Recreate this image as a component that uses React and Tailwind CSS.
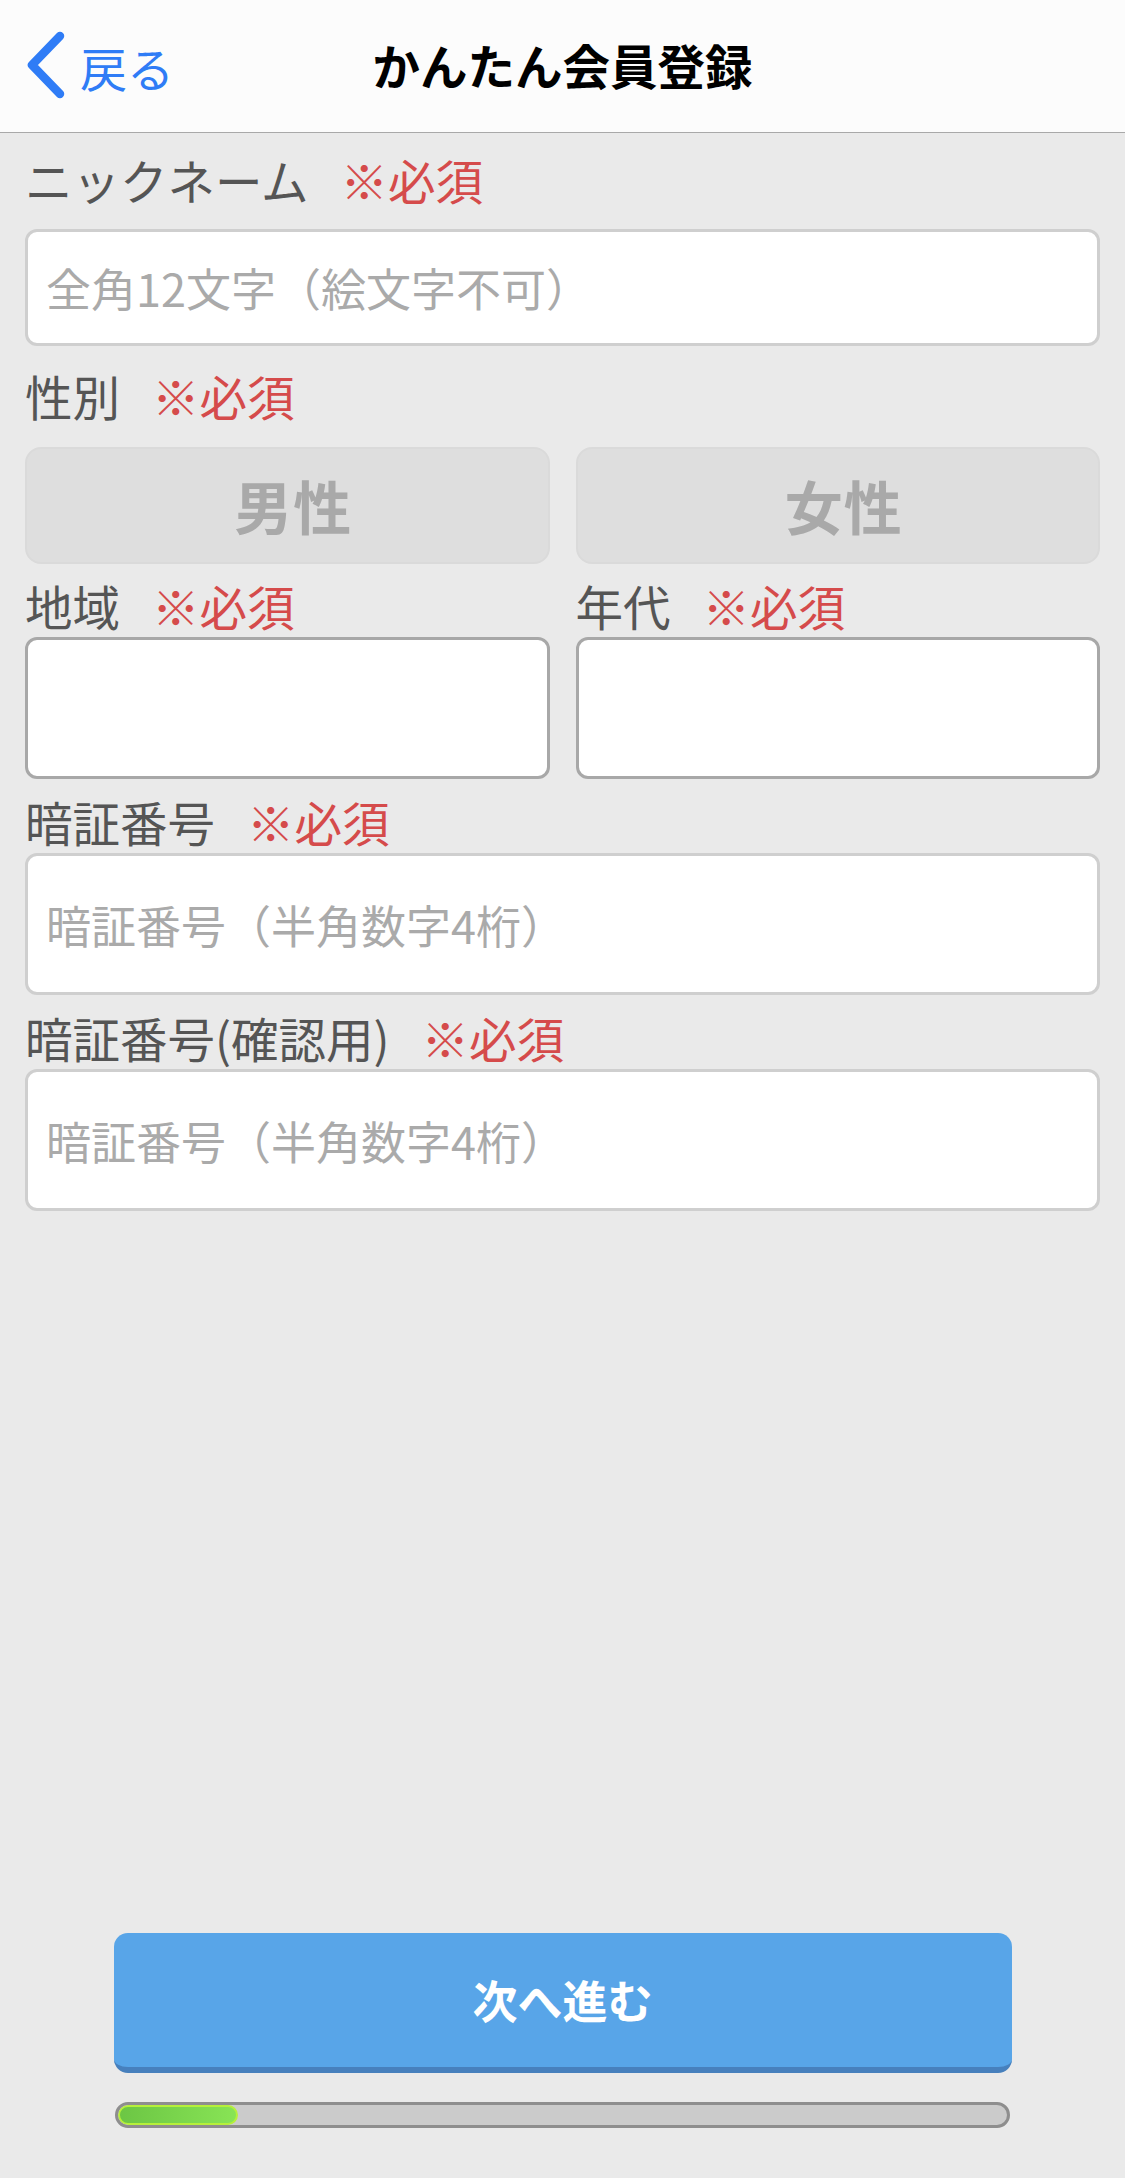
import React from "react";

const font = { fontFamily: '"Noto Sans CJK JP", "Noto Sans", sans-serif' };

function Label({ text, className = "" }) {
  return (
    <div className={`flex items-center text-[47.5px] leading-[56px] text-[#555555] ${className}`}>
      <span>{text}</span>
      <span className="ml-[32px] text-[#d54b4b]">※必須</span>
    </div>
  );
}

function TextBox({ placeholder, className = "" }) {
  return (
    <input
      type="text"
      placeholder={placeholder}
      className={`block w-full bg-white border-[3px] border-[#cfcfcf] rounded-[12px] pl-[18px] text-[45px] text-[#555] placeholder:text-[#aaaaaa] outline-none ${className}`}
    />
  );
}

export default function App() {
  return (
    <div style={font} className="w-[1125px] h-[2178px] bg-[#eaeaea] flex flex-col overflow-hidden">
      {/* header */}
      <header className="h-[133px] shrink-0 bg-[#fcfcfc] border-b-[1.5px] border-[#a9a9a9] grid grid-cols-[1fr_auto_1fr] items-center">
        <div className="flex items-center pl-[26px]">
          <svg width="40" height="70" viewBox="0 0 40 70" className="block">
            <polyline
              points="34,5 6,34 34,63"
              fill="none"
              stroke="#2f7cf6"
              strokeWidth="8.5"
              strokeLinecap="round"
              strokeLinejoin="round"
            />
          </svg>
          <span className="ml-[14px] text-[47px] leading-none text-[#2f7cf6]">戻る</span>
        </div>
        <h1 className="text-[47.5px] font-bold text-black leading-none mt-[-3px]">かんたん会員登録</h1>
        <div />
      </header>

      {/* form */}
      <main className="px-[25px] flex flex-col">
        <Label text="ニックネーム" className="mt-[19px]" />
        <TextBox placeholder="全角12文字（絵文字不可）" className="mt-[21px] h-[117px]" />

        <Label text="性別" className="mt-[22px]" />
        <div className="mt-[23px] grid grid-cols-2 gap-[26px]">
          <button className="h-[117px] rounded-[16px] bg-[#dedede] border-2 border-[#dadada] pl-[12px] text-[58px] font-bold text-[#a9a9a9] tracking-[1px]">
            男性
          </button>
          <button className="h-[117px] rounded-[16px] bg-[#dedede] border-2 border-[#dadada] pl-[12px] text-[58px] font-bold text-[#a9a9a9] tracking-[1px]">
            女性
          </button>
        </div>

        <div className="mt-[14px] grid grid-cols-2 gap-[26px]">
          <div className="flex flex-col">
            <Label text="地域" />
            <div className="mt-[3px] h-[142px] bg-white border-[3px] border-[#a8a8a8] rounded-[12px]" />
          </div>
          <div className="flex flex-col">
            <Label text="年代" />
            <div className="mt-[3px] h-[142px] bg-white border-[3px] border-[#a8a8a8] rounded-[12px]" />
          </div>
        </div>

        <Label text="暗証番号" className="mt-[15px]" />
        <TextBox placeholder="暗証番号（半角数字4桁）" className="mt-[3px] h-[142px]" />

        <Label text="暗証番号(確認用)" className="mt-[15px]" />
        <TextBox placeholder="暗証番号（半角数字4桁）" className="mt-[3px] h-[142px]" />
      </main>

      {/* footer */}
      <footer className="mt-auto pb-[50px] flex flex-col items-center">
        <button className="w-[898px] h-[140px] rounded-[14px] bg-[#58a5e8] border-b-[6px] border-[#4780bd] text-white text-[45px] font-bold flex items-center justify-center">
          次へ進む
        </button>
        <div className="mt-[29px] w-[895px] h-[26px] rounded-full border-[3px] border-[#8e8e8e] bg-[#cbcbcb] overflow-hidden">
          <div className="h-full w-[120px] rounded-full border-2 border-[#b6f03a] bg-gradient-to-r from-[#6cc644] to-[#88e455]" />
        </div>
      </footer>
    </div>
  );
}
